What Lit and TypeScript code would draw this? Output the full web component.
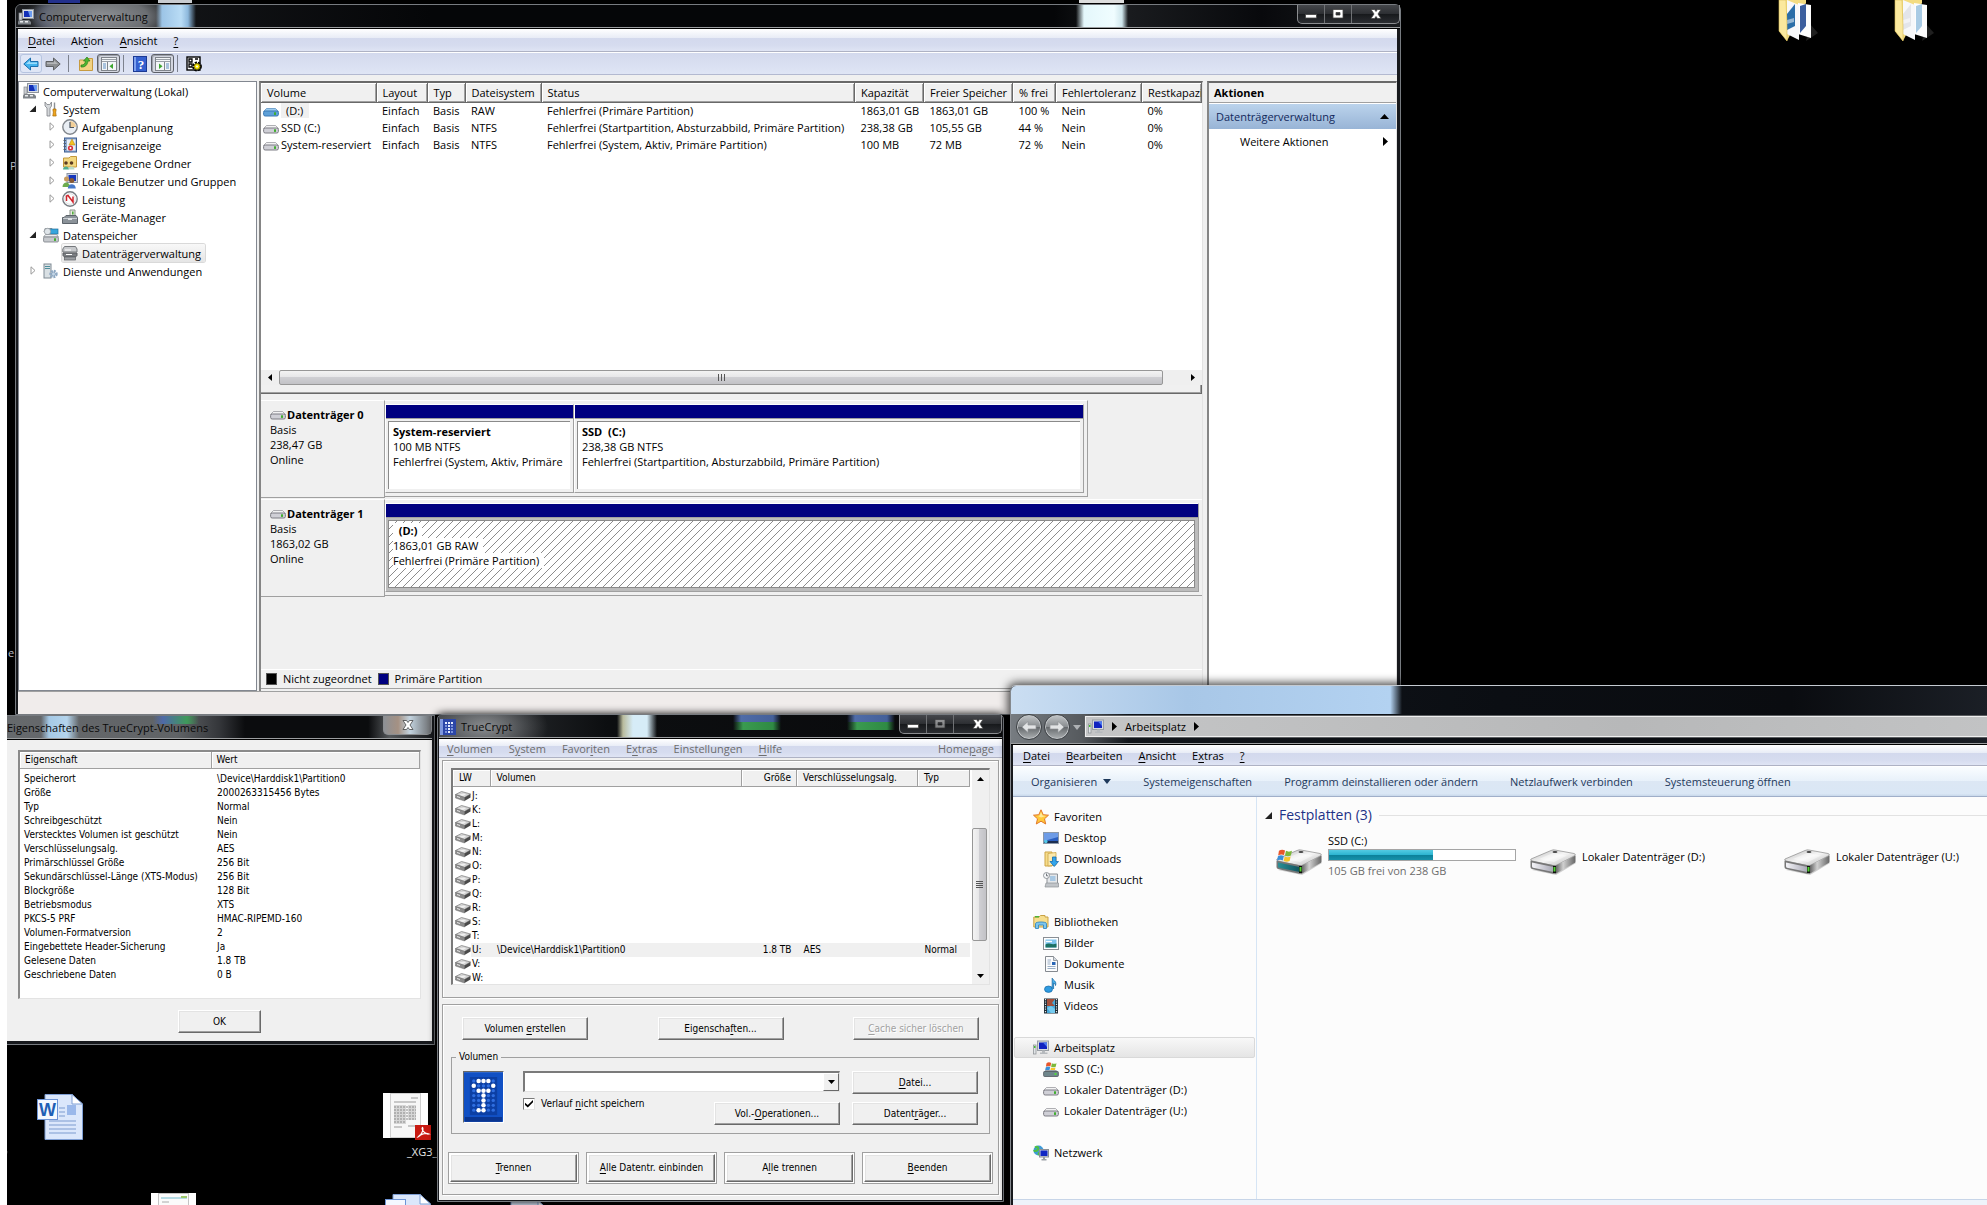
import { LitElement, html, svg, css, nothing, TemplateResult } from "lit";
import { customElement, property, state } from "lit/decorators.js";
import { classMap } from "lit/directives/class-map.js";

/* ---------- icons ---------- */

const flag = svg`
  <path d="M1.500 2.200C3 1 4.600 1 6.200 1.900L5.400 5.400C4 4.700 2.500 4.700 .9 5.700Z" fill="#e8562a"/>
  <path d="M6.900 2.200C8.400 3 10 3 11.500 2.200L10.700 5.700C9.200 6.500 7.600 6.500 6.100 5.700Z" fill="#7cb83a"/>
  <path d="M.7 6.400C2.200 5.400 3.700 5.400 5.200 6.100L4.400 9.600C2.900 8.900 1.400 8.900 0 9.900Z" fill="#3a8fd8"/>
  <path d="M6 6.500C7.400 7.300 9 7.300 10.500 6.500L9.700 10C8.200 10.800 6.600 10.800 5.100 10Z" fill="#f7c52c"/>`;

const flatDrive = (top: string, body: string, edge: string) => svg`
  <path d="M3.500 5.500H12.500L15.500 8.500H.5Z" fill="${top}" stroke="${edge}" stroke-width=".6"/>
  <rect x=".6" y="8" width="14.800" height="5" rx="1.600" fill="${body}" stroke="${edge}"/>
  <rect x="11" y="9.300" width="2" height="2.600" fill="#3fae2e"/>`;

const ICONS: Record<string, TemplateResult> = {
  computer: svg`
    <rect x="4.500" y=".5" width="11" height="9" fill="#d9dde2" stroke="#8e949c"/>
    <rect x="6" y="2" width="8" height="6" fill="#1230b8"/>
    <path d="M10 2H14V8H12Z" fill="#6c9cf0"/>
    <rect x="1" y="4" width="3" height="7" fill="#c9ccd0" stroke="#878b90" stroke-width=".7"/>
    <path d="M1 11H11L13 13V15.500H0V12.500Z" fill="#7f8489"/>
    <rect x="2" y="12" width="3" height="1.500" fill="#e8eaec"/><rect x="7" y="12" width="3" height="1.500" fill="#e8eaec"/>`,
  tools: svg`
    <path d="M2 1V5L4 7V15H7V7L8.500 5V1L6.800 3.500H4Z" fill="#d5d8db" stroke="#7e8286" stroke-width=".8"/>
    <path d="M11.500 1.500V8" stroke="#8b8f94" stroke-width="1.400"/>
    <path d="M10 8H13V10L12.600 11L13.200 15H9.800L10.400 11L10 10Z" fill="#f0a51c" stroke="#a86b07" stroke-width=".7"/>`,
  clock: svg`
    <circle cx="8" cy="8" r="7.200" fill="#e9eef4" stroke="#81868c" stroke-width="1.400"/>
    <path d="M8 8V2A6 6 0 0 1 14 8Z" fill="#f2cf98"/>
    <path d="M8 3V8.500H12" fill="none" stroke="#4d5660" stroke-width="1.200"/>`,
  events: svg`
    <rect x="2.500" y="1" width="12" height="14" fill="#8ea9cd" stroke="#3f5f92"/>
    <rect x="5" y="2.500" width="8.500" height="11" fill="#e9eff7"/>
    <path d="M1.500 3.500H4M1.500 6.500H4M1.500 9.500H4M1.500 12.500H4" stroke="#55606e"/>
    <path d="M10 2L13 8H7Z" fill="#f6c324" stroke="#a57c05" stroke-width=".5"/>
    <circle cx="8.500" cy="11" r="2.600" fill="#d8303a"/><circle cx="8.500" cy="11" r="1" fill="#fff"/>`,
  shared: svg`
    <path d="M1.500 3H7L8.500 1.500H14.500V12H1.500Z" fill="#f3d880" stroke="#c4983a"/>
    <circle cx="4" cy="8" r="1.800" fill="#5a3b22"/><circle cx="9.500" cy="8" r="1.800" fill="#5a3b22"/>
    <path d="M1 14.500C1 10.500 7 10.500 7 14.500Z" fill="#4fae8e"/><path d="M6.500 14.500C6.500 10.500 12.500 10.500 12.500 14.500Z" fill="#b9dccb"/>`,
  users: svg`
    <rect x="5" y=".5" width="10.500" height="9" fill="#cfd6e2" stroke="#8b94a3"/>
    <rect x="6.500" y="2" width="7.500" height="6" fill="#1737bd"/>
    <circle cx="4.500" cy="6" r="2.500" fill="#c79a5e"/><path d="M.5 14C.5 8 8 8 8 14Z" fill="#6dac4e"/>
    <circle cx="9.800" cy="7.500" r="2.500" fill="#8a5a33"/><path d="M5.800 15.500C5.800 9.800 13.800 9.800 13.800 15.500Z" fill="#4779c9"/>`,
  perf: svg`
    <circle cx="8" cy="8" r="7.200" fill="#fdfdfd" stroke="#777c82" stroke-width="1.400"/>
    <circle cx="8" cy="8" r="5.300" fill="none" stroke="#c8ccd0" stroke-width=".6"/>
    <path d="M4.500 10V5L6 4.500L11 11V5.500" fill="none" stroke="#d0242c" stroke-width="1.500"/>`,
  devices: svg`
    <path d="M8 1H13V7H8Z" fill="#e6eadf" stroke="#8c948c"/><rect x="10" y="2.500" width="1.600" height="3" fill="#51ae3d"/>
    <path d="M2 8.500L4 6.500H14L15.500 8.500V14.500H.5V8.500Z" fill="#8b9299" stroke="#5d646b"/>
    <path d="M1 9.500H15" stroke="#c9ced3"/><rect x="6" y="9" width="4" height="2" fill="#dfe3e6"/>`,
  storage: svg`
    <path d="M2 1.500H9L10 5H1Z" fill="#c6cacf" stroke="#7f858b" stroke-width=".8"/>
    <rect x="7" y="2" width="8" height="5" fill="#36a5dd" stroke="#1f6f9c" stroke-width=".7"/>
    <circle cx="4.500" cy="4.500" r="3.200" fill="#dfe5e9" stroke="#8c9298" stroke-width=".7"/>
    <path d="M2.500 7.500H13.500L15.500 10H.5Z" fill="#eceef0" stroke="#83888e" stroke-width=".7"/>
    <rect x=".6" y="10" width="14.800" height="5" rx="1" fill="#c6c9cd" stroke="#7a7f85" stroke-width=".8"/>
    <rect x="11" y="11.300" width="2" height="2.600" fill="#3fae2e"/>`,
  diskmgmt: svg`
    <path d="M2.500 1.500H13.500L15 4V7H.8V4Z" fill="#c7c9cc" stroke="#75787c"/>
    <path d="M1 8H15V10.500L13.500 12H2.500L1 10.500Z" fill="#7b7e82" stroke="#5a5d61"/>
    <path d="M3 5H9M4 9.500H10" stroke="#fff" stroke-width="1.200"/>
    <rect x="2.500" y="12" width="11" height="3" fill="#9b9ea2" stroke="#5a5d61" stroke-width=".7"/>`,
  services: svg`
    <rect x="1" y="1" width="7" height="14" fill="#d9e0e4" stroke="#7e8a93"/>
    <path d="M2 3.500H7M2 5.500H7" stroke="#4d8f9c" stroke-width="1.200"/>
    <circle cx="10.500" cy="11" r="3.200" fill="none" stroke="#8fa9c4" stroke-width="2" stroke-dasharray="2 1"/>
    <circle cx="10.500" cy="11" r="2" fill="#c3d5e6" stroke="#7391b0" stroke-width=".7"/>`,
  drive: flatDrive("#f2f2f3", "#cfcfd6", "#7d7d84"),
  driveblue: flatDrive("#9ccbee", "#5ea0d8", "#3b78b4"),
  back: svg`<path d="M.8 8L7.500 2V5.500H15V10.500H7.500V14Z" fill="#42b3ee" stroke="#1b6fae" stroke-width="1"/><path d="M3 8L7 4.500V6.500H14V8Z" fill="#9cdcfb"/>`,
  forward: svg`<path d="M15.200 8L8.500 2V5.500H1V10.500H8.500V14Z" fill="#8d8f92" stroke="#5f6164" stroke-width="1"/><path d="M13 8L9 4.500V6.500H2V8Z" fill="#b4b6b8"/>`,
  folderup: svg`
    <path d="M1.500 4H8L9.500 2.500H14.500V14.500H1.500Z" fill="#f2d283" stroke="#c79b40"/>
    <path d="M3 9C6 9 7 8 7.500 5H5.500L9 1L12 5H10C9.500 9 7 11.500 3 11Z" fill="#4cb531" stroke="#27801a" stroke-width=".7"/>`,
  panelleft: svg`
    <rect x=".5" y="1.500" width="15" height="13" fill="#f4f6f8" stroke="#80858c"/>
    <path d="M1 3.500H15M1 5.500H15" stroke="#9aa0a8"/><path d="M6.500 6V14" stroke="#80858c"/>
    <path d="M2 8H5M2 10H5M2 12H5" stroke="#5f8fc2"/><path d="M12 7.500V13L8.500 10.200Z" fill="#3da62f"/>`,
  panelright: svg`
    <rect x=".5" y="1.500" width="15" height="13" fill="#f4f6f8" stroke="#80858c"/>
    <path d="M1 3.500H15M1 5.500H15" stroke="#9aa0a8"/><path d="M9.500 6V14" stroke="#80858c"/>
    <path d="M11 8H14M11 10H14M11 12H14" stroke="#5f8fc2"/><path d="M4 7.500V13L7.500 10.200Z" fill="#3da62f"/>`,
  help: svg`
    <rect x="1.500" y=".5" width="13" height="15" fill="#3560cf" stroke="#1c3a94"/><path d="M2 1H4V15H2Z" fill="#7ea1ee"/>
    <text x="9" y="12.500" text-anchor="middle" font-family="Liberation Serif, serif" font-weight="bold" font-size="13" fill="#fff">?</text>`,
  settings: svg`
    <rect x="1" y="1" width="13" height="13" fill="#fff" stroke="#000" stroke-width="1.400"/>
    <path d="M3 3H6V6H3ZM3 8H6V11H3ZM9 3H12" fill="none" stroke="#000" stroke-width="1.300"/>
    <circle cx="11" cy="10.500" r="3.600" fill="none" stroke="#000" stroke-width="2.600" stroke-dasharray="2 .9"/>
    <circle cx="11" cy="10.500" r="3" fill="#f7e600" stroke="#6d6400"/><circle cx="11" cy="10.500" r="1" fill="#fff"/>`,
  tcsmall: svg`
    <rect width="16" height="16" fill="#2b46a8"/><path d="M0 0H3V16H0Z" fill="#7e97dd"/>
    <g fill="#e8eeff"><rect x="5" y="3" width="2" height="2"/><rect x="8" y="3" width="2" height="2"/><rect x="11" y="3" width="2" height="2"/><rect x="8" y="6" width="2" height="2"/><rect x="8" y="9" width="2" height="2"/><rect x="8" y="12" width="2" height="2"/></g>
    <g fill="#7c93da"><rect x="5" y="6" width="2" height="2"/><rect x="11" y="6" width="2" height="2"/><rect x="5" y="9" width="2" height="2"/><rect x="11" y="9" width="2" height="2"/><rect x="5" y="12" width="2" height="2"/><rect x="11" y="12" width="2" height="2"/></g>`,
  tcdrive: svg`
    <path d="M.5 6.500L6.500 3.500L15.500 6L9.500 9.500Z" fill="#d2d2d2" stroke="#868686" stroke-width=".8"/>
    <path d="M.5 6.500L9.500 9.500V13L.5 10Z" fill="#8c8c8c" stroke="#6c6c6c" stroke-width=".5"/><path d="M15.500 6L9.500 9.500V13L15.500 9.500Z" fill="#4a4a4a"/>
    <path d="M2 8.500L5 9.500" stroke="#e9e9e9"/><path d="M4 6.500L9 5.500L11 6.500L8 8Z" fill="#efefef"/>`,
  star: svg`<path d="M8 .8L10.200 5.700L15.500 6.200L11.500 9.800L12.700 15L8 12.200L3.300 15L4.500 9.800L.5 6.200L5.800 5.700Z" fill="#ffc93a" stroke="#e2782a"/><path d="M8 3L9.500 6.500L13 7L8 8.500L5 7L6.800 6.500Z" fill="#ffe99a"/>`,
  desktop: svg`<rect x=".5" y="2.500" width="15" height="11" fill="#2b5fc0" stroke="#8a97a8"/><path d="M1 3H15V7L1 11Z" fill="#6d9be6"/><rect x="1" y="11" width="14" height="2" fill="#1b2d50"/><circle cx="2.800" cy="11.500" r="1.800" fill="#54c8e8"/>`,
  downloads: svg`<path d="M2 1H9V15H2Z" fill="#f6dc8a" stroke="#cda547"/><path d="M5 2.500L13 1.500V14L5 15Z" fill="#fbe9ac" stroke="#cda547" stroke-width=".8"/><path d="M9.500 6H13V10.500H15.500L11.200 15.500L7 10.500H9.500Z" fill="#33a5ea" stroke="#126bb3" stroke-width=".8"/>`,
  recent: svg`<path d="M4 2H14.500V14H4Z" fill="#e4e7ea" stroke="#8e9297"/><rect x="7" y="4" width="5.500" height="5" fill="#a8c8e3"/><path d="M3 11H15.500V15H2Z" fill="#c0c4c8" stroke="#8e9297" stroke-width=".7"/><circle cx="3.500" cy="3.500" r="3" fill="#f6f8fa" stroke="#7e8388" stroke-width=".8"/><path d="M3.500 1.500V3.800H5.200" stroke="#50565c" fill="none" stroke-width=".8"/>`,
  libraries: svg`<path d="M.8 3H6L7.500 1.500H12V3H15V13H.8Z" fill="#f6de8e" stroke="#c9a245"/><rect x="2" y="2" width="4" height="1.500" fill="#4db338"/><path d="M2.500 14.500V9.500C2.500 7.500 13.500 7.500 13.500 9.500V14.500H10.500V11H5.500V14.500Z" fill="#7cc6ee" stroke="#3889bd" stroke-width=".9"/>`,
  pictures: svg`<rect x=".5" y="2.500" width="15" height="12" fill="#fff" stroke="#8a8f95"/><rect x="2.500" y="4.500" width="11" height="8" fill="#7cc4ee"/><path d="M2.500 9.500C6 7 8 10.500 13.500 8.500V12.500H2.500Z" fill="#1d7264"/><path d="M3 6.500H9" stroke="#fff" stroke-width="1.400"/>`,
  document: svg`<path d="M2.500 .5H10.500L14.500 4.500V15.500H2.500Z" fill="#fbfcfd" stroke="#84898f"/><path d="M10.500 .5V4.500H14.500" fill="#d4dae0" stroke="#84898f" stroke-width=".8"/><path d="M4.500 4H8M4.500 6H7.500M4.500 8H7.500M4.500 10.500H12.500M4.500 12.500H12.500" stroke="#8ea6c0" stroke-width=".9"/><rect x="9" y="6" width="3.500" height="3" fill="#2a66b5"/>`,
  music: svg`<ellipse cx="5.500" cy="12.200" rx="4" ry="3.200" fill="#2f9be0" stroke="#1568a5" stroke-width=".7"/><path d="M9.200 12V1.200C10 3.500 14 4 12.500 8.500C12.300 6.500 10.800 6 10.600 6V12" fill="#49b3ee" stroke="#1568a5" stroke-width=".8"/>`,
  video: svg`<rect x="1" y=".5" width="14" height="15" fill="#1e2c36"/><rect x="4" y="1" width="8" height="14" fill="#49a7d8"/><path d="M4 1H12L9 5L12 8H4Z" fill="#a1503c"/><path d="M4 10L8 8L12 11V15H8Z" fill="#74cbf0"/><path d="M2.500 1V15M13.500 1V15" stroke="#dfe6ea" stroke-width="1.200" stroke-dasharray="1.200 1.200"/>`,
  pc: svg`<rect x="4.500" y="1" width="11" height="9.500" fill="#d6dade" stroke="#989ea4"/><rect x="6" y="2.500" width="8" height="6.500" fill="#1022c0"/><path d="M10 2.500H14V7Z" fill="#4a78f0"/><rect x=".5" y="5" width="2.500" height="9" fill="#e0e3e6" stroke="#878c91" stroke-width=".7"/><rect x="1" y="6" width="1.500" height="2" fill="#42c030"/><path d="M9 10.500H12V12.500H14.500V14H7V12.500H9Z" fill="#b5b9bd"/>`,
  windrive: svg`<g transform="translate(2 0)">${flag}</g><path d="M3 9H13L15.500 11H.5Z" fill="#9da3a9"/><rect x=".6" y="10.500" width="14.800" height="5" rx="1" fill="#6f868b" stroke="#50585e" stroke-width=".8"/><rect x="11.500" y="12" width="2" height="2" fill="#52d83c"/>`,
  network: svg`<circle cx="5.500" cy="5.500" r="5" fill="#3f9ad8"/><path d="M2 2.500C5 1 6 3 4.500 5C3 7 2 5 .8 6.500M6 10C5 8 7 7 9 8" fill="none" stroke="#4ec045" stroke-width="2.200"/><rect x="6.500" y="4.500" width="9" height="7.500" fill="#cfd4da" stroke="#8a9097"/><rect x="7.500" y="5.500" width="7" height="5.500" fill="#1127c4"/><path d="M10 12H12V14H13.500V15.500H8.500V14H10Z" fill="#9ba0a6"/>`,
};

const icon = (name: string) => html`<svg class="ico" viewBox="0 0 16 16" aria-hidden="true">${ICONS[name]}</svg>`;

const bigDrive = (id: string, system: boolean) => html`<svg class="big" viewBox="0 0 48 28" aria-hidden="true">
  <defs>
    <linearGradient id="top-${id}" x1="0" y1="0" x2="1" y2="1"><stop offset="0" stop-color="#b9b9b9"/><stop offset=".5" stop-color="#f6f6f6"/><stop offset="1" stop-color="#b4b4b4"/></linearGradient>
    <linearGradient id="side-${id}" x1="0" y1="0" x2="1" y2="0"><stop offset="0" stop-color="#555"/><stop offset=".4" stop-color="#d0d0d0"/><stop offset="1" stop-color="#666"/></linearGradient>
    <linearGradient id="front-${id}" x1="0" y1="0" x2="1" y2="0"><stop offset="0" stop-color=${system ? "#2c8f96" : "#f4f4f8"}/><stop offset="1" stop-color=${system ? "#11545f" : "#a7a7b4"}/></linearGradient>
  </defs>
  <path d="M3 22L27 27L47 15L44 13Z" fill="#000" opacity=".18"/>
  <path d="M2 11L22 2.500Q24 1.500 26 2L45 5.500Q47 6 46 7.500L28 17Q26 18 24 17.500L3 13Q1 12 2 11Z" fill="url(#top-${id})" stroke="#8a8a8a" stroke-width=".7"/>
  <path d="M10 11L24 5L38 7.500L25 14Z" fill="#fff" opacity=".45"/>
  <ellipse cx="26" cy="4" rx="2.500" ry=".9" fill="#444"/>
  <path d="M1.500 12.500L26 17.500V25.500Q25 26 23 25.500L3 21Q1.500 20.500 1.500 19Z" fill="#777"/>
  <path d="M3 14.500L24.500 19V24L4 19.800Q3 19.500 3 18Z" fill="url(#front-${id})"/>
  <path d="M26 18L46.500 7.500V13.500Q46.500 14.500 45.500 15L28 25Q26.500 26 26 25.500Z" fill="url(#side-${id})"/>
  <path d="M24 18H27V25H24Z" fill="#111"/><rect x="24.500" y="19" width="2" height="4.500" fill="#4fd22e"/>
  ${system ? svg`<g transform="translate(2 0) scale(1.300)">${flag}</g>` : nothing}
</svg>`;

/* Label with its access key marked by an underscore in front of the letter. */
const keyed = (text: string) => {
  const at = text.indexOf("_");
  return at < 0 ? text : html`${text.slice(0, at)}<u>${text[at + 1]}</u>${text.slice(at + 2)}`;
};

/* ---------- shared styles ---------- */

const base = css`
  :host { display: block; font: 11px/15px "Open Sans", "Noto Sans", sans-serif; color: #000; box-sizing: border-box; }
  *, *::before, *::after { box-sizing: border-box; }
  button { font: inherit; color: inherit; background: none; border: 0; padding: 0; margin: 0; text-align: left; white-space: nowrap; }
  ul { list-style: none; margin: 0; padding: 0; }
  table { border-collapse: collapse; border-spacing: 0; }
  th { font-weight: 400; text-align: left; }
  u { text-underline-offset: 2px; }
  .ico { display: block; flex: none; width: 16px; height: 16px; }
  .frame { height: 100%; display: flex; flex-direction: column; border: 1px solid #777b80; background: #17191d; }
  .title { display: flex; align-items: center; flex: none; border-bottom: 1px solid #000; box-shadow: inset 0 -1px #9c9ea0; }
  .title h1 { font: inherit; margin: 0; flex: 1; white-space: nowrap; color: #0a0a0a; }
  .menu { display: flex; align-items: center; flex: none; border-bottom: 1px solid #aeb2c4; background: linear-gradient(#fff, #e8ecf6 40%, #d3d9ed 41%, #d6dcef 75%, #dfe4f4); }
  .menu button { padding: 0 8px; }
  .tc { font: 10px/14px "DejaVu Sans Condensed", "DejaVu Sans", sans-serif; }
  .push { display: flex; align-items: center; justify-content: center; height: 23px; width: 126px; background: #f0f0f0; border: 1px solid #696969; border-left-color: #fff; border-top-color: #fff; box-shadow: inset -1px -1px #a0a0a0, inset 1px 1px #e3e3e3; }
`;

@customElement("caption-buttons")
class CaptionButtons extends LitElement {
  @property({ type: Boolean }) closeOnly = false;
  @property({ type: Boolean }) fixedSize = false;
  static styles = css`
    :host { display: block; align-self: flex-start; }
    .group { display: flex; border: 1px solid #8b8d90; border-top: 0; border-radius: 0 0 5px 5px; background: linear-gradient(#45474b, #2c2e32 50%, #17191c 51%, #2b2d31); overflow: hidden; }
    .group.light { background: linear-gradient(90deg, #8d9095, #a59183 30%, #c3d3df 55%, #6b6d70); }
    button { height: 18px; width: 27px; padding: 0; margin: 0; border: 0; border-right: 1px solid #6f7174; background: none; display: grid; place-items: center; }
    button.close { width: 47px; border-right: 0; }
    svg { width: 14px; height: 12px; display: block; }
    .dim { opacity: .45; }
  `;
  render() {
    return html`<div class=${classMap({ group: true, light: this.closeOnly })}>
      ${this.closeOnly ? nothing : html`
        <button aria-label="Minimieren"><svg viewBox="0 0 14 12"><rect x="1.500" y="6.500" width="11" height="3.500" fill="#fff" stroke="#444" stroke-width=".8"/></svg></button>
        <button aria-label="Maximieren"><svg class=${this.fixedSize ? "dim" : ""} viewBox="0 0 14 12"><path d="M2 1.500H12V10H2ZM5 4.500V7H9V4.500Z" fill="#fff" fill-rule="evenodd" stroke="#444" stroke-width=".8"/></svg></button>`}
      <button class="close" aria-label="Schließen"><svg viewBox="0 0 14 12"><path d="M2 1.500H5.500L7 3.500L8.500 1.500H12L9 6L12 10.500H8.500L7 8.500L5.500 10.500H2L5 6Z" fill="#fff" stroke="#444" stroke-width=".8"/></svg></button>
    </div>`;
  }
}

/* ---------- Computerverwaltung ---------- */

type Node = { label: string; icon: string; level: number; fold?: "open" | "closed"; selected?: boolean };
const TREE: Node[] = [
  { label: "Computerverwaltung (Lokal)", icon: "computer", level: 0 },
  { label: "System", icon: "tools", level: 1, fold: "open" },
  { label: "Aufgabenplanung", icon: "clock", level: 2, fold: "closed" },
  { label: "Ereignisanzeige", icon: "events", level: 2, fold: "closed" },
  { label: "Freigegebene Ordner", icon: "shared", level: 2, fold: "closed" },
  { label: "Lokale Benutzer und Gruppen", icon: "users", level: 2, fold: "closed" },
  { label: "Leistung", icon: "perf", level: 2, fold: "closed" },
  { label: "Geräte-Manager", icon: "devices", level: 2 },
  { label: "Datenspeicher", icon: "storage", level: 1, fold: "open" },
  { label: "Datenträgerverwaltung", icon: "diskmgmt", level: 2, selected: true },
  { label: "Dienste und Anwendungen", icon: "services", level: 1, fold: "closed" },
];
const VOLUME_HEAD = ["Volume", "Layout", "Typ", "Dateisystem", "Status", "Kapazität", "Freier Speicher", "% frei", "Fehlertoleranz", "Restkapazität"];
const VOLUMES = [
  [" (D:)", "Einfach", "Basis", "RAW", "Fehlerfrei (Primäre Partition)", "1863,01 GB", "1863,01 GB", "100 %", "Nein", "0%"],
  ["SSD (C:)", "Einfach", "Basis", "NTFS", "Fehlerfrei (Startpartition, Absturzabbild, Primäre Partition)", "238,38 GB", "105,55 GB", "44 %", "Nein", "0%"],
  ["System-reserviert", "Einfach", "Basis", "NTFS", "Fehlerfrei (System, Aktiv, Primäre Partition)", "100 MB", "72 MB", "72 %", "Nein", "0%"],
];

@customElement("computer-management")
class ComputerManagement extends LitElement {
  @state() private selected = 0;
  static styles = [base, css`
    .frame { border-radius: 6px 6px 0 0; padding: 0 3px 0 2px; }
    .title { height: 24px; gap: 5px; margin: 0 -3px 0 -2px; padding-left: 2px; border-radius: 5px 5px 0 0;
      background: linear-gradient(90deg, transparent 140px, #9cc4e6 146px, #b9dcf5 165px, #8db8dc 172px, transparent 180px),
        linear-gradient(90deg, transparent 1060px, #e4f7fb 1068px, #f0fdff 1098px, #cfe6ec 1106px, transparent 1112px),
        radial-gradient(78px 30px at 85px 12px, #8f9296, #6b6e72 60%, transparent),
        radial-gradient(30px 22px at 45px 12px, #8fa2e0, transparent),
        linear-gradient(90deg, #1a1c1f, #050608 30%, #050608 75%, #1a1c1f 80%, #08090c 90%, #1b1d20); }
    .menu { height: 23px; padding-left: 2px; }
    .tools { display: flex; align-items: center; height: 23px; padding-left: 2px; flex: none; border-top: 1px solid #fff; border-bottom: 1px solid #b3b9d0; background: linear-gradient(#d3d9ed, #dfe5f5); }
    .tools button { display: grid; place-items: center; width: 22px; height: 19px; }
    .tools .hot { border: 1px solid #b6c4e0; border-radius: 3px; background: #dfe6f6; }
    .tools .down { width: 23px; border: 1px solid #5d6068; border-radius: 3px; background: #d3d6df; box-shadow: inset 1px 1px #9da1ab; }
    .sep { width: 1px; height: 17px; background: #7d828e; margin: 0 6px 0 4px; }
    .sep.tight { margin: 0 5px 0 3px; }
    .body { flex: 1; display: grid; grid-template-columns: 239px minmax(0, 1fr) 190px; background: #f0f0f0; padding-top: 6px; min-height: 0; }
    .tree { background: #fff; border: 1px solid #828790; }
    .node { display: flex; align-items: center; height: 18px; }
    .l0 { padding-left: 4px; } .l1 { padding-left: 8px; } .l2 { padding-left: 27px; }
    .fold { width: 16px; height: 10px; flex: none; padding: 0 2px; }
    .fold svg { width: 8px; height: 9px; display: block; }
    .name { display: flex; align-items: center; gap: 4px; height: 18px; padding-right: 4px; white-space: nowrap; border-radius: 2px; }
    .sel .name { background: linear-gradient(#f8f8f8, #e5e5e5); box-shadow: 0 0 0 1px #d9d9d9; }
    .main { display: flex; flex-direction: column; margin: 0 4px 0 2px; min-width: 0; border: 2px solid #696969; border-left-color: #858585; border-width: 2px 1px 0 2px; border-right-color: #e3e3e3; background: #f0f0f0; }
    .list { height: 287px; background: #fff; overflow: hidden; }
    table { width: 100%; table-layout: fixed; }
    th { height: 19px; padding: 0 0 0 6px; background: #f0f0f0; border: 1px solid #696969; border-width: 0 1px 1px 0; box-shadow: inset 1px 1px #fff, inset -1px -1px #a0a0a0; white-space: nowrap; overflow: hidden; }
    td { height: 17px; padding: 0 0 0 6px; white-space: nowrap; overflow: hidden; }
    td:first-child { padding-left: 2px; }
    td button { display: flex; align-items: center; gap: 2px; height: 16px; }
    .lead { background: #f0f0f0; padding: 0 6px 0 5px; }
    .scroll { display: flex; align-items: center; height: 15px; background: #efefef; }
    .scroll button { width: 18px; height: 15px; display: grid; place-items: center; }
    .scroll svg { width: 4px; height: 7px; }
    .track { flex: 1; padding-right: 21px; height: 15px; }
    .thumb { height: 15px; display: flex; align-items: center; justify-content: center; gap: 2px; border: 1px solid #979797; border-radius: 2px; background: linear-gradient(#f3f3f3, #e6e6e8 48%, #cfcfd3 50%, #c2c2c6); }
    .thumb i { width: 1px; height: 7px; background: #555; }
    .split { height: 9px; background: #f0f0f0; border: 1px solid #696969; border-width: 0 1px 1px 0; box-shadow: inset -1px -1px #a0a0a0; }
    .disks { flex: 1; padding-top: 6px; }
    .disk { display: flex; height: 98px; margin-bottom: 1px; }
    .info { width: 124px; flex: none; padding: 5px 0 0 9px; border: 1px solid #a0a0a0; border-width: 1px 1px 1px 0; border-top-color: #fff; }
    .info h2 { display: flex; align-items: center; font: inherit; font-weight: 700; margin: 0; gap: 1px; }
    .info p, .part p { margin: 0; white-space: nowrap; }
    .parts { display: flex; height: 97px; padding: 3px 3px 3px 0; border-top: 1px solid #fff; border-bottom: 1px solid #a0a0a0; }
    .parts.short { width: 703px; border-right: 1px solid #a0a0a0; }
    .parts.full { flex: 1; }
    .part { border: 1px solid #a0a0a0; border-top-color: #fff; border-left-color: #fff; display: flex; flex-direction: column; min-width: 0; flex: 1; }
    .part.small { flex: 0 0 189px; }
    .band { height: 14px; background: #000080; border-bottom: 1px solid #a0a0a0; flex: none; }
    .box { flex: 1; margin: 2px 3px 3px 2px; padding: 2px 3px 0 4px; border: 1px solid #8a8a8a; border-width: 1px 0 0 1px; background: #fff; overflow: hidden; }
    .part h3 { font: inherit; font-weight: 700; margin: 0; white-space: pre; }
    .raw { background: #bcbcbc; }
    .raw .box { border-width: 1px; background: linear-gradient(135deg, transparent 46%, #8c8c8c 47%, #8c8c8c 53%, transparent 54%) 0 0 / 8px 8px, #fff; }
    .raw .box > * { width: max-content; background: #fff; padding-right: 5px; }
    .legend { display: flex; align-items: center; height: 20px; padding-left: 5px; border-top: 1px solid #fff; border-bottom: 1px solid #a0a0a0; gap: 6px; margin-bottom: 2px; line-height: 14px; }
    .sw { width: 11px; height: 12px; background: #000; border: 1px solid #555; }
    .sw.prim { background: #000080; }
    .actions { border: 2px solid #696969; border-left-color: #858585; border-width: 2px 1px 0 2px; border-right-color: #e3e3e3; background: #fff; }
    .actions h2 { font: inherit; font-weight: 700; margin: 0; height: 20px; padding: 2px 5px 0; background: #f0f0f0; border-bottom: 1px solid #a0a0a0; }
    .actions button { display: flex; align-items: center; justify-content: space-between; width: 100%; height: 24px; padding: 0 7px; }
    .actions .group { margin-top: 1px; height: 25px; background: linear-gradient(#bbd3ec, #98b4d6); color: #12295c; }
    .actions .more { padding-left: 31px; }
    .actions svg { width: 9px; height: 9px; }
    .status { height: 23px; flex: none; background: #f0eceb; border-top: 1px solid #a0a0a0; }
  `];
  render() {
    const widths = ["115px", "51px", "38px", "76px", "", "69px", "89px", "43px", "86px", "60px"];
    return html`<section class="frame">
      <header class="title">${icon("computer")}<h1>Computerverwaltung</h1><caption-buttons></caption-buttons></header>
      <nav class="menu">${["_Datei", "Ak_tion", "_Ansicht", "_?"].map((m) => html`<button>${keyed(m)}</button>`)}</nav>
      <div class="tools">
        <button class="hot" aria-label="Zurück">${icon("back")}</button><button aria-label="Vorwärts">${icon("forward")}</button><span class="sep"></span>
        <button aria-label="Nach oben">${icon("folderup")}</button><button class="down" aria-label="Konsolenstruktur">${icon("panelleft")}</button><span class="sep tight"></span>
        <button aria-label="Hilfe">${icon("help")}</button><button class="down" aria-label="Aktionsbereich">${icon("panelright")}</button><span class="sep tight"></span>
        <button aria-label="Einstellungen">${icon("settings")}</button>
      </div>
      <div class="body">
        <ul class="tree" role="tree">${TREE.map((n) => html`<li role="treeitem" class="node l${n.level} ${n.selected ? "sel" : ""}">
          ${n.level === 0 ? nothing : html`<span class="fold">${n.fold === "open"
            ? html`<svg viewBox="0 0 8 9"><path d="M7 1.500V8H.5Z" fill="#222"/></svg>`
            : n.fold === "closed" ? html`<svg viewBox="0 0 8 9"><path d="M2 .8V8.200L6 4.500Z" fill="#fff" stroke="#9a9a9a"/></svg>` : nothing}</span>`}
          <span class="name">${icon(n.icon)}${n.label}</span></li>`)}</ul>
        <main class="main">
          <div class="list"><table>
            <colgroup>${widths.map((w) => html`<col style=${w ? `width:${w}` : ""}>`)}</colgroup>
            <thead><tr>${VOLUME_HEAD.map((h) => html`<th>${h}</th>`)}</tr></thead>
            <tbody>${VOLUMES.map((row, i) => html`<tr>${row.map((cell, c) => html`<td>${c === 0
              ? html`<button @click=${() => (this.selected = i)}>${icon(i === this.selected ? "driveblue" : "drive")}<span class=${i === this.selected ? "lead" : ""}>${cell}</span></button>`
              : cell}</td>`)}</tr>`)}</tbody>
          </table></div>
          <div class="scroll">
            <button aria-label="Nach links"><svg viewBox="0 0 4 7"><path d="M4 0V7L0 3.500Z"/></svg></button>
            <div class="track"><div class="thumb"><i></i><i></i><i></i></div></div>
            <button aria-label="Nach rechts"><svg viewBox="0 0 4 7"><path d="M0 0V7L4 3.500Z"/></svg></button>
          </div>
          <div class="split"></div>
          <div class="disks">
            <div class="disk">
              <div class="info"><h2>${icon("drive")}Datenträger 0</h2><p>Basis</p><p>238,47 GB</p><p>Online</p></div>
              <div class="parts short">
                <div class="part small"><div class="band"></div><div class="box"><h3>System-reserviert</h3><p>100 MB NTFS</p><p>Fehlerfrei (System, Aktiv, Primäre</p></div></div>
                <div class="part"><div class="band"></div><div class="box"><h3>SSD  (C:)</h3><p>238,38 GB NTFS</p><p>Fehlerfrei (Startpartition, Absturzabbild, Primäre Partition)</p></div></div>
              </div>
            </div>
            <div class="disk">
              <div class="info"><h2>${icon("drive")}Datenträger 1</h2><p>Basis</p><p>1863,02 GB</p><p>Online</p></div>
              <div class="parts full">
                <div class="part raw"><div class="band"></div><div class="box"><h3>  (D:)</h3><p>1863,01 GB RAW</p><p>Fehlerfrei (Primäre Partition)</p></div></div>
              </div>
            </div>
          </div>
          <div class="legend"><span class="sw"></span>Nicht zugeordnet<span class="sw prim"></span>Primäre Partition</div>
        </main>
        <aside class="actions">
          <h2>Aktionen</h2>
          <button class="group">Datenträgerverwaltung<svg viewBox="0 0 9 9"><path d="M0 7L4.500 2L9 7Z"/></svg></button>
          <button class="more">Weitere Aktionen<svg viewBox="0 0 9 9"><path d="M3 0V9L8 4.500Z"/></svg></button>
        </aside>
      </div>
      <footer class="status"></footer>
    </section>`;
  }
}

/* ---------- Eigenschaften ---------- */

const PROPS = [
  ["Speicherort", "\\Device\\Harddisk1\\Partition0"], ["Größe", "2000263315456 Bytes"], ["Typ", "Normal"],
  ["Schreibgeschützt", "Nein"], ["Verstecktes Volumen ist geschützt", "Nein"], ["Verschlüsselungsalg.", "AES"],
  ["Primärschlüssel Größe", "256 Bit"], ["Sekundärschlüssel-Länge (XTS-Modus)", "256 Bit"], ["Blockgröße", "128 Bit"],
  ["Betriebsmodus", "XTS"], ["PKCS-5 PRF", "HMAC-RIPEMD-160"], ["Volumen-Formatversion", "2"],
  ["Eingebettete Header-Sicherung", "Ja"], ["Gelesene Daten", "1.8 TB"], ["Geschriebene Daten", "0 B"],
];

@customElement("volume-properties")
class VolumeProperties extends LitElement {
  static styles = [base, css`
    .frame { border-left: 0; padding: 0 2px 3px 0; }
    .title { height: 24px; background:
      linear-gradient(90deg, transparent 34px, #a5c9e6 42px, #b4d4ec 60px, transparent 72px),
      linear-gradient(90deg, transparent 146px, #4f6aa8 156px, #3f9a5a 180px, transparent 192px) 0 0 / 100% 8px no-repeat,
      linear-gradient(90deg, #66696c, #606366 40%, #34363a 50%, #0b0c0e 56%, #0b0c0e 85%, #55585b 90%, #17191c); }
    .client { flex: 1; padding: 10px 11px 0; background: #f0f0f0; display: flex; flex-direction: column; align-items: center; }
    .list { width: 100%; height: 249px; background: #fff; border: 2px solid #8a8a8a; border-color: #8a8a8a #e3e3e3 #e3e3e3 #8a8a8a; border-width: 2px 1px 1px 2px; }
    table { width: 100%; table-layout: fixed; }
    .key { width: 191px; }
    th { height: 16px; padding: 0 0 0 5px; background: #f0f0f0; border-right: 1px solid #a0a0a0; border-bottom: 1px solid #a0a0a0; box-shadow: inset 1px 1px #fff; }
    thead::after { content: ""; display: block; height: 3px; }
    td { height: 14px; padding: 0 0 0 4px; white-space: nowrap; }
    td:last-child { padding-left: 6px; }
    .push { width: 83px; margin-top: 11px; }
  `];
  render() {
    return html`<section class="frame">
      <header class="title"><h1>Eigenschaften des TrueCrypt-Volumens</h1><caption-buttons closeOnly></caption-buttons></header>
      <div class="client tc">
        <div class="list"><table>
          <colgroup><col class="key"><col></colgroup>
          <thead><tr><th>Eigenschaft</th><th>Wert</th></tr></thead>
          <tbody>${PROPS.map(([k, v]) => html`<tr><td>${k}</td><td>${v}</td></tr>`)}</tbody>
        </table></div>
        <button class="push">OK</button>
      </div>
    </section>`;
  }
}

/* ---------- TrueCrypt ---------- */

const LETTERS = "JKLMNOPQRSTUVW".split("");
const LOGO = [".###.", "#...#", ".###.", "..#..", "..#..", "..#..", ".##.."];

@customElement("truecrypt-window")
class TrueCryptWindow extends LitElement {
  static styles = [base, css`
    .frame { border-radius: 5px 5px 0 0; padding: 0 1px 1px; box-shadow: 0 0 8px #000; }
    .title { height: 24px; gap: 5px; padding-left: 1px; background:
      linear-gradient(90deg, transparent 178px, #b9bb9c 184px, #d6ecf7 194px, #d6ecf7 208px, transparent 218px),
      linear-gradient(90deg, transparent 294px, #4f6ca8 302px, #44609a 334px, transparent 342px, transparent 408px, #4f6ca8 416px, #44609a 448px, transparent 456px) 0 0 / 100% 7px no-repeat,
      linear-gradient(90deg, transparent 294px, #3a9a50 304px, #2f8a44 334px, transparent 342px, transparent 408px, #3a9a50 418px, #2f8a44 448px, transparent 456px) 0 7px / 100% 8px no-repeat,
      radial-gradient(64px 34px at 45px 12px, #8a8d90, transparent),
      linear-gradient(90deg, #33363a, #0c0e10 30%, #090a0c); }
    .menu { height: 19px; color: #6d6d6d; }
    .menu .home { margin-left: auto; }
    .client { flex: 1; background: #f0f0f0; padding: 2px 3px 5px; display: flex; flex-direction: column; gap: 6px; }
    .pane { border: 1px solid #a0a0a0; box-shadow: inset 1px 1px #fff, 1px 1px #fff; }
    .upper { padding: 7px 8px 12px; }
    .list { display: flex; height: 217px; background: #fff; border: 2px solid #7a7a7a; border-width: 2px 1px 1px 2px; border-right-color: #e3e3e3; border-bottom-color: #e3e3e3; }
    table { flex: 1; table-layout: fixed; width: 100%; }
    .lw { width: 37px; } .size { width: 55px; } .alg { width: 121px; } .typ { width: 52px; }
    th { height: 16px; padding: 0 0 0 6px; background: #f0f0f0; border-right: 1px solid #a0a0a0; border-bottom: 1px solid #a0a0a0; box-shadow: inset 1px 1px #fff; }
    thead::after { content: ""; display: block; height: 2px; }
    td { height: 14px; padding: 0 0 0 7px; white-space: nowrap; }
    td:first-child { padding-left: 2px; }
    th.num, td.num { text-align: right; padding-right: 5px; }
    .cur td { background: #f0f0f0; }
    .cur td:first-child { background: linear-gradient(90deg, #fff 18px, #f0f0f0 18px); }
    .drv { display: flex; align-items: center; gap: 1px; height: 14px; }
    .bar { width: 17px; flex: none; display: flex; flex-direction: column; background: #f0f0f0; margin-left: 2px; }
    .bar button { height: 17px; display: grid; place-items: center; }
    .bar svg { width: 7px; height: 4px; }
    .slot { flex: 1; padding-top: 41px; }
    .thumb { height: 113px; width: 15px; display: flex; flex-direction: column; gap: 1px; align-items: center; justify-content: center; border: 1px solid #979797; border-radius: 2px; background: linear-gradient(90deg, #f3f3f3, #e6e6e8 48%, #cfcfd3 50%, #c2c2c6); }
    .thumb i { width: 7px; height: 1px; background: #555; }
    .lower { padding: 12px 5px 0; flex: 1; }
    .row { display: flex; justify-content: space-between; padding: 0 14px; }
    .off { color: #a0a0a0; text-shadow: 1px 1px #fff; }
    fieldset { display: flex; gap: 12px; margin: 10px 3px 0; padding: 7px 11px 8px; border: 1px solid #a0a0a0; min-width: 0; }
    legend { padding: 0 3px; margin-left: -7px; height: 14px; }
    .logo { width: 41px; height: 52px; flex: none; border: 1px solid #696969; border-right-color: #fff; border-bottom-color: #fff; }
    .mid { flex: 1; margin-left: 7px; }
    .combo { display: flex; height: 21px; border: 2px solid #7a7a7a; border-right-color: #e3e3e3; border-bottom-color: #e3e3e3; border-width: 2px 1px 1px 2px; background: #fff; position: relative; }
    .combo select { flex: 1; appearance: none; border: 0; background: #fff; font: inherit; padding: 0 20px 0 3px; }
    .drop { position: absolute; right: 0; top: 0; width: 16px; height: 18px; display: grid; place-items: center; background: #f0f0f0; border: 1px solid #696969; border-left-color: #fff; border-top-color: #fff; pointer-events: none; }
    .drop svg { width: 7px; height: 4px; }
    .opts { display: flex; justify-content: space-between; align-items: flex-start; margin-top: 5px; }
    .opts .push { margin-top: 5px; }
    .check { display: flex; align-items: center; gap: 6px; height: 13px; }
    input { appearance: none; width: 12px; height: 12px; margin: 0; background: #fff; border: 1px solid #7a7a7a; border-right-color: #e3e3e3; border-bottom-color: #e3e3e3; display: grid; place-items: center; }
    input:checked::after { content: ""; width: 8px; height: 8px; background: #000; clip-path: polygon(0 40%, 35% 70%, 100% 5%, 100% 35%, 35% 100%, 0 70%); }
    .side { display: flex; flex-direction: column; gap: 8px; }
    .foot { display: flex; gap: 7px; margin-top: 18px; }
    .foot .wrap { flex: 1; border: 1px solid #a0a0a0; padding: 1px; height: 32px; background: #fff; }
    .foot .push { width: 100%; height: 28px; }
  `];
  render() {
    return html`<section class="frame">
      <header class="title">${icon("tcsmall")}<h1>TrueCrypt</h1><caption-buttons fixedSize></caption-buttons></header>
      <nav class="menu">${["_Volumen", "S_ystem", "Favor_iten", "E_xtras", "Einstellun_gen", "_Hilfe"].map((m) => html`<button>${keyed(m)}</button>`)}<button class="home">${keyed("Home_page")}</button></nav>
      <div class="client tc">
        <div class="pane upper"><div class="list">
          <table>
            <colgroup><col class="lw"><col><col class="size"><col class="alg"><col class="typ"></colgroup>
            <thead><tr><th>LW</th><th>Volumen</th><th class="num">Größe</th><th>Verschlüsselungsalg.</th><th>Typ</th></tr></thead>
            <tbody>${LETTERS.map((l) => html`<tr class=${l === "U" ? "cur" : ""}>
              <td><div class="drv">${icon("tcdrive")}${l}:</div></td>
              <td>${l === "U" ? "\\Device\\Harddisk1\\Partition0" : ""}</td>
              <td class="num">${l === "U" ? "1.8 TB" : ""}</td>
              <td>${l === "U" ? "AES" : ""}</td><td>${l === "U" ? "Normal" : ""}</td></tr>`)}</tbody>
          </table>
          <div class="bar">
            <button aria-label="Nach oben"><svg viewBox="0 0 7 4"><path d="M0 4H7L3.500 0Z"/></svg></button>
            <div class="slot"><div class="thumb"><i></i><i></i><i></i><i></i></div></div>
            <button aria-label="Nach unten"><svg viewBox="0 0 7 4"><path d="M0 0H7L3.500 4Z"/></svg></button>
          </div>
        </div></div>
        <div class="pane lower">
          <div class="row">
            <button class="push"><span>${keyed("Volumen _erstellen")}</span></button>
            <button class="push"><span>${keyed("Eigenscha_ften...")}</span></button>
            <button class="push off" disabled><span>${keyed("_Cache sicher löschen")}</span></button>
          </div>
          <fieldset>
            <legend>Volumen</legend>
            <svg class="logo" viewBox="0 0 40 51" aria-hidden="true">
              <rect width="40" height="51" fill="#1150c4"/><rect x="6" y="5" width="28" height="39" fill="#0c3fa4"/>
              <path d="M1 46H39V51H1Z" fill="#0a3590"/>
              ${LOGO.map((line, y) => line.split("").map((c, x) => svg`<circle cx=${10 + x * 5} cy=${9 + y * 5} r=${c === "#" ? 2.3 : 1.7} fill=${c === "#" ? "#fff" : "#2f6ee0"}/>`))}
            </svg>
            <div class="mid">
              <div class="combo"><select aria-label="Volumen"><option></option></select><span class="drop"><svg viewBox="0 0 7 4"><path d="M0 0H7L3.500 4Z"/></svg></span></div>
              <div class="opts">
                <label class="check"><input type="checkbox" checked><span>${keyed("Verlauf _nicht speichern")}</span></label>
                <button class="push"><span>${keyed("Vol.-_Operationen...")}</span></button>
              </div>
            </div>
            <div class="side">
              <button class="push"><span>${keyed("_Datei...")}</span></button>
              <button class="push"><span>${keyed("Datent_räger...")}</span></button>
            </div>
          </fieldset>
          <div class="foot">${["_Trennen", "_Alle Datentr. einbinden", "A_lle trennen", "_Beenden"].map((b) => html`<div class="wrap"><button class="push"><span>${keyed(b)}</span></button></div>`)}</div>
        </div>
      </div>
    </section>`;
  }
}

/* ---------- Arbeitsplatz ---------- */

const PLACES: { head: [string, string]; items: [string, string][]; current?: boolean }[] = [
  { head: ["star", "Favoriten"], items: [["desktop", "Desktop"], ["downloads", "Downloads"], ["recent", "Zuletzt besucht"]] },
  { head: ["libraries", "Bibliotheken"], items: [["pictures", "Bilder"], ["document", "Dokumente"], ["music", "Musik"], ["video", "Videos"]] },
  { head: ["pc", "Arbeitsplatz"], current: true, items: [["windrive", "SSD (C:)"], ["drive", "Lokaler Datenträger (D:)"], ["drive", "Lokaler Datenträger (U:)"]] },
  { head: ["network", "Netzwerk"], items: [] },
];

@customElement("explorer-window")
class ExplorerWindow extends LitElement {
  static styles = [base, css`
    .frame { border-color: #c5cbd2 transparent transparent #85898e; border-right: 0; border-bottom: 0; border-radius: 6px 0 0 0; padding-left: 2px; box-shadow: 0 0 10px 2px rgba(0, 0, 0, .75); overflow: hidden; }
    .top { height: 59px; margin-left: -2px; padding: 29px 0 0 4px; display: flex; align-items: flex-start; border-bottom: 1px solid #000; box-shadow: inset 0 -1px #9c9ea0;
      background: linear-gradient(90deg, #cbdef2, #a8c7e7 45%, #b3d2f1 97%, transparent) 0 0 / 391px 28px no-repeat,
        linear-gradient(90deg, #777c81, #565a5e 18%, transparent 30%) 0 28px / 391px 30px no-repeat,
        linear-gradient(90deg, #14181d, #0b0e13 50%, #0a0c10 80%, #1b1f26); }
    .nav { width: 26px; height: 26px; margin: -1px 1px 0; display: block; flex: none; border: 1px solid #3c4044; border-radius: 50%; background: linear-gradient(#c3c6c8, #8a8e91 48%, #63676a 50%, #aeb2b4); box-shadow: inset 0 0 0 1px #c2c5c8; }
    .nav svg { width: 24px; height: 24px; display: block; }
    .hist { width: 12px; height: 24px; display: grid; place-items: center; }
    .hist svg { width: 8px; height: 5px; }
    .addr { flex: 1; height: 23px; display: flex; align-items: center; gap: 8px; padding-left: 3px; margin-left: 1px; border: 1px solid #5a5d60; border-right: 0; background: linear-gradient(90deg, #c4c5c6, #b7b8b9 60%, #c2c3c4); box-shadow: inset 1px 1px #efefef, inset 0 -1px #efefef; }
    .addr svg.tri { width: 5px; height: 9px; }
    .menu { height: 21px; padding-left: 2px; }
    .cmds { display: flex; align-items: center; flex: none; height: 31px; gap: 32px; padding-left: 18px; color: #1e395b; border-top: 1px solid #fff; border-bottom: 1px solid #a0afc9; background: linear-gradient(#fafdff, #e8f1fa 48%, #dce7f4 50%, #dae7f5 92%, #c8d8ea); line-height: 14px; }
    .cmds button { display: flex; align-items: center; gap: 6px; }
    .cmds svg { width: 8px; height: 5px; }
    .body { flex: 1; display: grid; grid-template-columns: 244px minmax(0, 1fr); background: #fcfcfc; min-height: 0; }
    .side { border-right: 1px solid #d6e5f5; padding: 9px 1px 0; }
    .side ul { margin-bottom: 21px; }
    .place { display: flex; align-items: center; gap: 5px; height: 21px; padding-left: 18px; color: inherit; text-decoration: none; border: 1px solid transparent; border-radius: 2px; }
    .child { padding-left: 28px; }
    .current { border-color: #d9d9d9; background: linear-gradient(#f8f8f8, #e5e5e5); }
    .view { padding: 7px 0 0 8px; min-width: 0; overflow: hidden; }
    .view h2 { display: flex; align-items: center; gap: 7px; margin: 0; font: inherit; font-size: 14px; line-height: 22px; color: #1e3287; white-space: nowrap; }
    .view h2::after { content: ""; flex: 1; height: 1px; background: #e2e2e2; }
    .view h2 svg { width: 7px; height: 7px; }
    .drives { display: flex; padding: 5px 0 0 10px; }
    .drv { flex: 0 0 254px; display: flex; gap: 5px; height: 48px; align-items: center; }
    .drv .big { width: 48px; height: 28px; flex: none; margin-top: 13px; }
    .drv.plain > span { margin-top: 2px; }
    .used { width: 188px; height: 12px; border: 1px solid #a5a5a5; background: #fff; margin: 1px 0 2px; }
    .fill { height: 10px; background: linear-gradient(#53cbe2, #2fb6d2 45%, #0b8099 50%, #1792ab); }
    .free { color: #6d6d6d; }
    .status { height: 6px; flex: none; background: #eef3fa; border-top: 1px solid #c7d5e8; }
  `];
  render() {
    const used = Math.round(((238 - 105) / 238) * 1000) / 10;
    const tri = html`<svg class="tri" viewBox="0 0 5 9"><path d="M0 0V9L5 4.500Z"/></svg>`;
    return html`<section class="frame">
      <div class="top">
        <button class="nav" aria-label="Zurück"><svg viewBox="0 0 24 24"><path d="M5 12L11 6.500V10H19V14H11V17.500Z" fill="#e2e4e5" stroke="#8f9396" stroke-width=".7"/></svg></button>
        <button class="nav" aria-label="Vorwärts"><svg viewBox="0 0 24 24"><path d="M19 12L13 6.500V10H5V14H13V17.500Z" fill="#e2e4e5" stroke="#8f9396" stroke-width=".7"/></svg></button>
        <button class="hist" aria-label="Verlauf"><svg viewBox="0 0 8 5"><path d="M0 0H8L4 5Z" fill="#aeb1b4"/></svg></button>
        <div class="addr">${icon("pc")}${tri}<button>Arbeitsplatz</button>${tri}</div>
      </div>
      <nav class="menu">${["_Datei", "_Bearbeiten", "_Ansicht", "E_xtras", "_?"].map((m) => html`<button>${keyed(m)}</button>`)}</nav>
      <div class="cmds">
        <button>Organisieren<svg viewBox="0 0 8 5"><path d="M0 0H8L4 5Z" fill="#1e395b"/></svg></button>
        ${["Systemeigenschaften", "Programm deinstallieren oder ändern", "Netzlaufwerk verbinden", "Systemsteuerung öffnen"].map((c) => html`<button>${c}</button>`)}
      </div>
      <div class="body">
        <nav class="side">${PLACES.map((p) => html`<ul>
          <li><a href="#" class="place ${p.current ? "current" : ""}">${icon(p.head[0])}${p.head[1]}</a></li>
          ${p.items.map(([i, t]) => html`<li><a href="#" class="place child">${icon(i)}${t}</a></li>`)}
        </ul>`)}</nav>
        <main class="view">
          <h2><svg viewBox="0 0 7 7"><path d="M7 0V7H0Z" fill="#222"/></svg>Festplatten (3)</h2>
          <div class="drives">
            <div class="drv">${bigDrive("c", true)}<div>SSD (C:)<div class="used"><div class="fill" style="width:${used}%"></div></div><div class="free">105 GB frei von 238 GB</div></div></div>
            <div class="drv plain">${bigDrive("d", false)}<span>Lokaler Datenträger (D:)</span></div>
            <div class="drv plain">${bigDrive("u", false)}<span>Lokaler Datenträger (U:)</span></div>
          </div>
        </main>
      </div>
      <footer class="status"></footer>
    </section>`;
  }
}

/* ---------- desktop ---------- */

const wordDoc = (letter: string) => html`<svg viewBox="0 0 46 46" aria-hidden="true">
  <path d="M8 .5H35L45.500 10V45.500H8Z" fill="#dbe7fb" stroke="#7f9fd4"/><path d="M35 .5V10H45.500Z" fill="#fff" stroke="#7f9fd4"/>
  <path d="M22 14H28M22 18H28M22 22H28M12 27H39M12 31H39M12 35H39M12 39H39" stroke="#7d9bd0" stroke-width="1.200"/>
  <rect x="30" y="11" width="9" height="10" fill="#9ab8ea"/><rect x=".5" y="5.500" width="20" height="20" fill="#f4f8ff" stroke="#6d94d6"/>
  ${letter ? svg`<text x="10.500" y="21.500" text-anchor="middle" font-family="Liberation Sans, sans-serif" font-weight="bold" font-size="18" fill="#1f5fb5">${letter}</text>` : nothing}</svg>`;
const pdfDoc = html`<svg viewBox="0 0 48 47" aria-hidden="true">
  <rect width="45" height="45" fill="#fff"/><rect x="7.500" y=".5" width="30" height="44" fill="#f7f7f7" stroke="#d0d0d0"/>
  <path d="M28 5H35M11 9H33M11 34H19M25 33H32" stroke="#999"/><path d="M11 12H23V31H11ZM25 12H33V27H25Z" fill="#d6d6d6"/><path d="M11 14H33M11 17H33M11 20H33M11 23H33M11 26H33M11 29H23" stroke="#8a8a8a" stroke-dasharray="2 1"/>
  <rect x="32" y="32" width="16" height="15" fill="#c81a12"/><path d="M35 44C38 43 41 36 39.500 34.500C38 36 42 42 46 41C43 39.500 37 41 35 44Z" fill="none" stroke="#fff" stroke-width="1.200"/></svg>`;
const sheetDoc = html`<svg viewBox="0 0 48 47" aria-hidden="true">
  <rect width="45" height="45" fill="#fff"/><rect x="7.500" y=".5" width="30" height="44" fill="#fbfbfb" stroke="#c4c4c4"/>
  <path d="M10 5H36" stroke="#9fd0dd" stroke-width="1.500"/><path d="M30 4H36" stroke="#9cc86a" stroke-width="2"/><path d="M11 9H18" stroke="#aaa"/></svg>`;
const folder = (near: string, far: string) => html`<svg viewBox="0 0 40 41" aria-hidden="true">
  <path d="M28 41L40 33L32 24Z" fill="#333" opacity=".6"/><path d="M1 0H28V3L9 41L1 31Z" fill="#f3dc82"/>
  <path d="M20 3L33 5V38L20 34Z" fill="#fdfdfd"/><path d="M22 6L28 4V26L22 33Z" fill="${far}"/>
  <path d="M9 0L21 5V40L9 34Z" fill="#f7f8fa"/><path d="M9 14L17 4V26L9 30Z" fill="${near}"/><path d="M9 20L16 18V22L9 24Z" fill="#fff" opacity=".5"/>
  <path d="M1 0H8L9 26V41L1 31Z" fill="#fbe99e" stroke="#d9bc55" stroke-width=".6"/></svg>`;

@customElement("app-root")
class AppRoot extends LitElement {
  static styles = [base, css`
    :host { position: relative; min-height: 100vh; background: #000; border-left: 7px solid #fff; overflow: hidden; }
    .w { position: absolute; }
    .mgmt { left: 8px; top: 4px; width: 1386px; height: 711px; }
    .props { left: 0; top: 715px; width: 428px; height: 330px; }
    .crypt { left: 430px; top: 714px; width: 567px; height: 488px; }
    .explorer { left: 1003px; top: 685px; right: 0; bottom: 0; }
    .item { position: absolute; width: 46px; }
    .item svg { display: block; width: 46px; }
    .word { left: 30px; top: 1094px; }
    .pdf { left: 376px; top: 1093px; width: 48px; }
    .pdf svg, .sheet svg { width: 48px; }
    .sheet { left: 144px; top: 1193px; width: 48px; }
    .word2 { left: 378px; top: 1194px; } .word3 { left: 496px; top: 1200px; }
    .folder1 { left: 1771px; top: 0; width: 40px; } .folder2 { left: 1887px; top: 0; width: 40px; }
    .folder1 svg, .folder2 svg { width: 40px; }
    .cap { position: absolute; left: 400px; top: 1144px; color: #e8e8e8; }
    .edge { position: absolute; top: 0; height: 3px; }
    .e1 { left: 41px; width: 32px; background: #22308c; } .e2 { left: 151px; width: 34px; background: #c9ccd0; } .e3 { left: 1072px; width: 45px; background: #ddd; }
    .mark { position: absolute; left: -7px; top: 1150px; width: 8px; height: 10px; }
    .frag { position: absolute; left: 3px; top: 158px; color: #b9bec4; }
    .frag2 { top: 645px; left: 1px; }
  `];
  render() {
    return html`
      <div class="edge e1"></div><div class="edge e2"></div><div class="edge e3"></div>
      <div class="frag">P</div><div class="frag frag2">e</div>
      <div class="item folder1">${folder("#2b6ea8", "#3c5f9e")}</div><div class="item folder2">${folder("#e3e5ea", "#a9cbe4")}</div>
      <div class="item word">${wordDoc("W")}</div><div class="item pdf">${pdfDoc}</div><div class="cap">_XG3_</div>
      <div class="item sheet">${sheetDoc}</div><div class="item word2">${wordDoc("")}</div><div class="item word3">${wordDoc("")}</div>
      <svg class="mark" viewBox="0 0 8 10"><path d="M1 2H7L5 8Z" fill="#fff" stroke="#333" stroke-width="1.500"/></svg>
      <computer-management class="w mgmt"></computer-management>
      <volume-properties class="w props"></volume-properties>
      <truecrypt-window class="w crypt"></truecrypt-window>
      <explorer-window class="w explorer"></explorer-window>`;
  }
}
